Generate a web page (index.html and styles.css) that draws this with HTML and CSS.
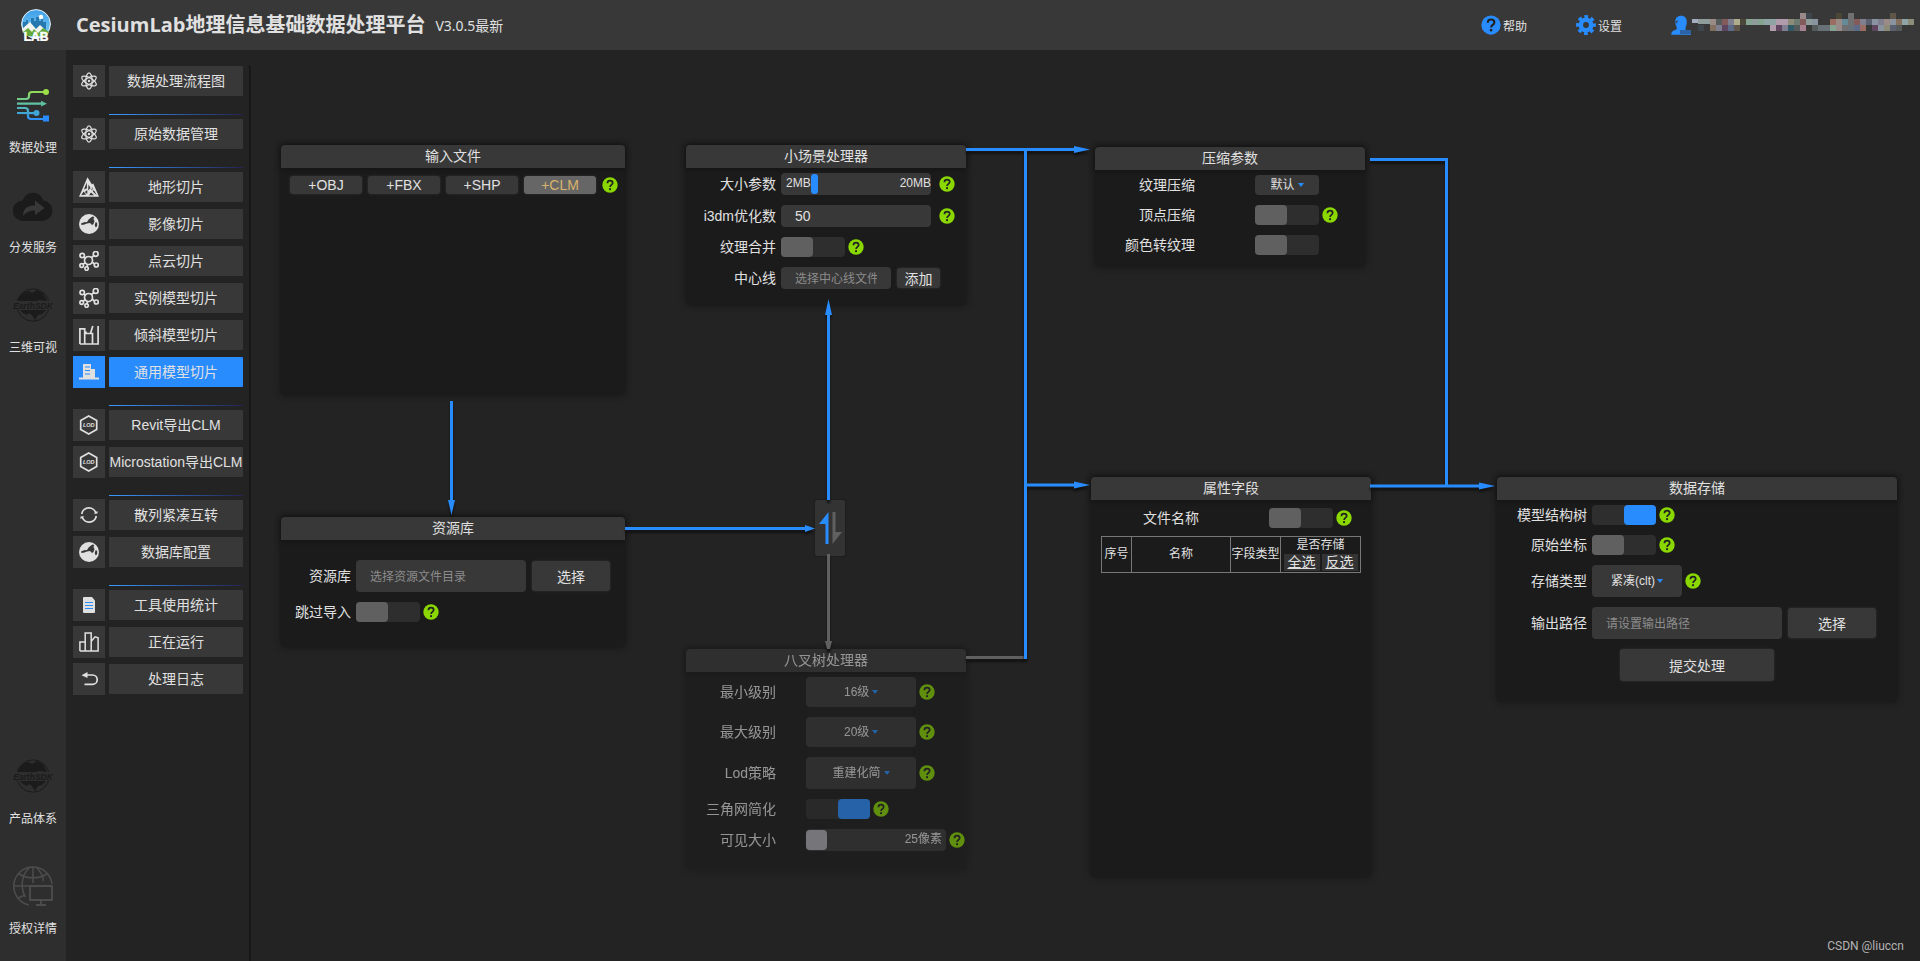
FILE: index.html
```html
<!DOCTYPE html>
<html lang="zh-CN">
<head>
    <meta charset="UTF-8">
    <meta name="viewport" content="width=device-width, initial-scale=1.0">
    <title>CesiumLab地理信息基础数据处理平台</title>
    <link rel="stylesheet" href="styles.css">
</head>
<body>
    <!-- 图标 -->
    <svg class="sprite" aria-hidden="true">
        <symbol id="i-help" viewBox="0 0 16 16">
            <circle cx="8" cy="8" r="7.7" fill="currentColor"/>
            <path d="M5.4 6.2C5.4 4.5 6.5 3.6 8 3.6s2.7 1 2.7 2.4c0 1.9-2.6 2-2.6 3.9" fill="none" stroke="#222" stroke-width="1.7"/>
            <rect x="7.1" y="11.2" width="1.9" height="1.9" fill="#222"/>
        </symbol>
        <symbol id="i-atom" viewBox="0 0 20 20">
            <g fill="none" stroke="currentColor" stroke-width="1.2">
                <ellipse cx="10" cy="10" rx="3.2" ry="8.2"/>
                <ellipse cx="10" cy="10" rx="3.2" ry="8.2" transform="rotate(60 10 10)"/>
                <ellipse cx="10" cy="10" rx="3.2" ry="8.2" transform="rotate(120 10 10)"/>
            </g>
            <circle cx="10" cy="10" r="1.2" fill="currentColor"/>
        </symbol>
        <symbol id="i-terrain" viewBox="0 0 20 20">
            <path d="M8.500.2 0 19.800h20L14.300 6.500l-1.500.8z" fill="currentColor"/>
            <path d="M7.700 5.500 5 12.500l3-1.300zM4.500 14.500 2.300 18.300l5-.8zM8.300 13l-2.500 2 2.500 2zM9.500 7.500l-.3 6 2.300-2.500zM14 9.500l-1.800 3.500 1 .3zM12 15.500l-2 2.700h5zM14.800 13l-1 1.500 4 3.700z" fill="#383838"/>
        </symbol>
        <symbol id="i-globe" viewBox="0 0 20 20">
            <circle cx="10" cy="10" r="10" fill="currentColor"/>
            <path d="M2 9.500 5 8.200l3-.2 2-3 3.500-2.500 1.800.5-.8 2 1 2-1 3-1.500 1-2-2-3 .5-2.500 1-3 .5zM16.700 8l1.500 1v3l-1.500 1.500-1-2.500z" fill="#383838"/>
        </symbol>
        <symbol id="i-points" viewBox="0 0 20 20">
            <g fill="none" stroke="currentColor" stroke-width="1.7">
                <circle cx="9.500" cy="9.500" r="4"/>
                <circle cx="3.200" cy="4.500" r="2.200"/>
                <circle cx="16.700" cy="2.900" r="2.400"/>
                <circle cx="2.700" cy="14.500" r="1.800"/>
                <circle cx="7.600" cy="17.600" r="1.700"/>
                <circle cx="17.300" cy="14" r="2"/>
                <path d="m5 6 1.500 1M12.500 6.500 15 4.500M6 12l-2 1M8.600 13.200 8 16M13 11l2.500 2"/>
            </g>
        </symbol>
        <symbol id="i-oblique" viewBox="0 0 20 20">
            <path d="M.9 19V3.800h4.800V19M6.500 8.500h7V19M7 8.500V6.500M11.500 8.500 13.800 1M19.100 1v18H.9" fill="none" stroke="currentColor" stroke-width="1.700"/>
        </symbol>
        <symbol id="i-building" viewBox="0 0 20 20">
            <path d="M4 2h8v5h4v8.500h4v2H0v-2h4z" fill="currentColor"/>
            <path d="M6 5h5M6 8.500h5M6 12h5" stroke="#288cff" stroke-width="1.200"/>
        </symbol>
        <symbol id="i-lod" viewBox="0 0 20 20">
            <path d="m9.700 1 8 4.500v9l-8 4.500-8-4.500v-9z" fill="none" stroke="currentColor" stroke-width="1.700"/>
            <text x="9.800" y="12" text-anchor="middle" font-size="5.500" font-weight="bold" fill="currentColor">LOD</text>
        </symbol>
        <symbol id="i-sync" viewBox="0 0 20 20">
            <path d="M2.700 9A7.300 7.300 0 0 1 17 8.500M17.300 11A7.300 7.300 0 0 1 3 11.500" fill="none" stroke="currentColor" stroke-width="1.700"/>
            <path d="M14.500 8.500h4V6zM5.500 11.500h-4V14z" fill="currentColor"/>
        </symbol>
        <symbol id="i-doc" viewBox="0 0 20 20">
            <path d="M5 2h8l3 3.500V17a1 1 0 0 1-1 1H5a1 1 0 0 1-1-1V3a1 1 0 0 1 1-1z" fill="currentColor"/>
            <path d="M6 7.500h8M6 10.500h8M6 13.500h8" stroke="#288cff" stroke-width="1.100"/>
        </symbol>
        <symbol id="i-running" viewBox="0 0 20 20">
            <path d="M.9 19v-9h5.300v9M6.200 11V5.500V.9h6V19M12.500 9l3.500-4.200 3.100 1V19H.9" fill="none" stroke="currentColor" stroke-width="1.500"/>
        </symbol>
        <symbol id="i-back" viewBox="0 0 20 20">
            <path d="M6 6h7.500a4.600 4.600 0 0 1 0 9.400H5.500" fill="none" stroke="currentColor" stroke-width="1.700"/>
            <path d="M2.500 6.200 8.500 3v6z" fill="currentColor"/>
        </symbol>
        <symbol id="i-earth" viewBox="0 0 40 40">
            <circle cx="20" cy="20" r="16.200" fill="none" stroke="#1b1b1b" stroke-width="1"/>
            <path d="M5 15c2-5 6-9 11-9l3 2 5-3 6 3 4 8-8-1-2 1H5zM7 25h26l-4 4-4 1-3 5-3-5-3-2-2 2-4-2z" fill="#1b1b1b"/>
            <rect x="0" y="16" width="40" height="8.500" fill="#2e2e2e"/>
            <text x="20" y="23.500" text-anchor="middle" font-size="8.500" font-weight="bold" font-style="italic" fill="#1b1b1b">EarthSDK</text>
        </symbol>
    </svg>

    <header class="header">
        <svg class="logo" viewBox="0 0 32 32">
            <defs>
                <linearGradient id="sky" x1="0" y1="0" x2="0" y2="1">
                    <stop offset="0" stop-color="#3f9fe8"/>
                    <stop offset="1" stop-color="#7fd0f5"/>
                </linearGradient>
            </defs>
            <circle cx="16" cy="15" r="14.400" fill="url(#sky)" stroke="#e8f2f8" stroke-width="1"/>
            <path d="M3 13h3v-2h2v3h3v-5h3v3h2V8h3v4h2v-2h2v3h3v9H3z" fill="#2678ae"/>
            <circle cx="21" cy="8" r="2.200" fill="#fff"/>
            <path d="m2 20 8-7 6 7 4-4 9 8H3z" fill="#f2f5ee"/>
            <path d="m3 23 5-4 4 4 2-3 4 4 5-5 6 4-2 4H5z" fill="#64a83a"/>
            <text x="16" y="31.500" text-anchor="middle" font-size="12" font-weight="bold" fill="#fff" stroke="#fff" stroke-width=".5">LAB</text>
        </svg>
        <h1 class="title">CesiumLab地理信息基础数据处理平台</h1>
        <span class="version">V3.0.5最新</span>
        <div class="header-links">
            <a href="#"><svg class="ic20 help-blue"><use href="#i-help"/></svg>帮助</a>
            <a href="#">
                <svg class="ic20" viewBox="0 0 20 20">
                    <circle cx="10" cy="10" r="5.200" fill="none" stroke="#288cff" stroke-width="4.500"/>
                    <circle cx="10" cy="10" r="8.200" fill="none" stroke="#288cff" stroke-width="3.400" stroke-dasharray="3.600 2.840" stroke-dashoffset="1.800"/>
                </svg>设置</a>
            <a href="#" class="user" aria-label="用户">
                <svg class="ic20" viewBox="0 0 20 20">
                    <path d="M10 .8c4 0 5.800 2.500 5.800 6.200 0 2.500-.6 4-1.200 5.200v3H20v4.600H.2c0-3 1.500-4.300 4.500-5l1-.5V12C4.500 10 4.200 8.500 4.200 6.500 4.500 3 6.500.8 10 .8z" fill="#288cff"/>
                    <path d="M9 15h11v4H9z" fill="#2c62a8"/>
                    <path d="M4.500 6l3-.5L5 9z" fill="#3a4a60"/>
                </svg>
                <svg class="mosaic" viewBox="0 0 37 3" preserveAspectRatio="none" shape-rendering="crispEdges">
                    <path fill="#988a88" d="M18 0h1v1h-1zM5 2h1v1H5zM24 2h1v1h-1z"/>
                    <path fill="#3c464c" d="M19 0h1v1h-1zM1 2h1v1H1z"/>
                    <path fill="#4a4638" d="M24 0h1v1h-1zM8 1h1v1H8z"/>
                    <path fill="#707070" d="M26 0h1v1h-1zM26 1h1v1h-1zM25 2h1v1h-1z"/>
                    <path fill="#5f5548" d="M33 0h1v1h-1zM7 2h1v1H7z"/>
                    <path fill="#a4acc0" d="M0 1h1v.7H0z"/>
                    <path fill="#8f9c9c" d="M1 1h2v.8H1zM10 1h1v1h-1zM19 1h1v1h-1z"/>
                    <path fill="#9b8b87" d="M3 1h1v1H3zM32 1h1v1h-1zM24 1h1v1h-1z"/>
                    <path fill="#555b5b" d="M4 1h1v1H4zM17 2h1v1h-1zM20 2h1v1h-1zM34 2h1v1h-1z"/>
                    <path fill="#845b5b" d="M5 1h1v1H5zM18 1h1v1h-1zM27 1h1v1h-1z"/>
                    <path fill="#7f7f8f" d="M6 1h1v1H6zM28 1h1v1h-1zM31 1h1v1h-1zM4 2h1v1H4zM15 2h1v1h-1z"/>
                    <path fill="#adad8d" d="M7 1h1v1H7z"/>
                    <path fill="#84a391" d="M9 1h1v1H9zM11 1h1v1h-1zM23 2h1v1h-1z"/>
                    <path fill="#8fa4a4" d="M12 1h2v1h-2zM35 1h1v1h-1z"/>
                    <path fill="#b09cac" d="M14 1h2v1h-2zM13 2h1v1h-1z"/>
                    <path fill="#8c8c78" d="M16 1h1v1h-1zM36 1h1v1h-1zM32 2h1v1h-1z"/>
                    <path fill="#6e7b70" d="M17 1h1v1h-1z"/>
                    <path fill="#8a94a0" d="M20 1h1v1h-1zM30 1h1v1h-1zM33 1h1v1h-1zM31 2h1v1h-1z"/>
                    <path fill="#9b6d62" d="M23 1h1v1h-1zM28 2h1v1h-1z"/>
                    <path fill="#658a98" d="M25 1h1v1h-1z"/>
                    <path fill="#5a6070" d="M29 1h1v1h-1zM33 2h1v1h-1z"/>
                    <path fill="#84705f" d="M34 1h1v1h-1zM3 2h1v1H3z"/>
                    <path fill="#5f4560" d="M5 2h1v1H5zM14 2h1v1h-1zM30 2h1v1h-1z"/>
                    <path fill="#5c6c88" d="M6 2h1v1H6zM27 2h1v1h-1z"/>
                    <path fill="#305a68" d="M16 2h1v1h-1z"/>
                    <path fill="#a88090" d="M18 2h1v1h-1z"/>
                    <path fill="#687078" d="M21 2h2v1h-2zM26 2h1v1h-1z"/>
                </svg>
            </a>
        </div>
    </header>

    <div class="layout">
        <nav class="nav">
            <div class="nav-top">
                <a href="#">
                    <svg viewBox="0 0 40 40">
                        <defs>
                            <linearGradient id="flow" gradientUnits="userSpaceOnUse" x1="0" y1="4" x2="0" y2="36">
                                <stop offset="0" stop-color="#9be048"/>
                                <stop offset=".5" stop-color="#5cbfae"/>
                                <stop offset="1" stop-color="#288cff"/>
                            </linearGradient>
                        </defs>
                        <g fill="none" stroke="url(#flow)" stroke-width="2.200">
                            <path d="M4 14h9q3 0 3-3V10q0-3 3-3h13M4 18.700l27-.1M4 23h8q3 0 3 3v5q0 3 3 3h14M4 28l18 .1"/>
                        </g>
                        <circle cx="33" cy="7" r="3" fill="#9be048"/>
                        <path d="M28 15.800l6 2.900-6 2.900z" fill="#5cc0a0"/>
                        <circle cx="23.500" cy="28" r="3" fill="#3fa6d8"/>
                        <rect x="30" y="30.500" width="6" height="6" fill="#288cff"/>
                    </svg>
                    <span>数据处理</span>
                </a>
                <a href="#">
                    <svg viewBox="0 0 40 40">
                        <path d="M10.500 36A10 10 0 0 1 9.500 15.500a11 11 0 0 1 21 0A10.300 10.300 0 0 1 29.500 36z" fill="#1b1b1b"/>
                        <path d="M10 31c0-8 5-10.500 12-10.500V15.500l9.500 7.500-9.500 7v-4.500c-5 0-9 1.500-12 5.500z" fill="#383838"/>
                    </svg>
                    <span>分发服务</span>
                </a>
                <a href="#"><svg><use href="#i-earth"/></svg><span>三维可视</span></a>
            </div>
            <div class="nav-bottom">
                <a href="#"><svg><use href="#i-earth"/></svg><span>产品体系</span></a>
                <a href="#">
                    <svg viewBox="0 0 40 40">
                        <g fill="none" stroke="#4c4c4c" stroke-width="1.600">
                            <path d="M39 18A19.200 19.200 0 1 0 16 39M20 1v16M1 20h16M16.500 1.500C7 10 8 24 12.500 31M23.500 1.500C28 6 30 10 30.500 15M6 8c8 5 20 5 28 0M5 32l7-3"/>
                            <path d="M17 20h22v14H17zM28 34v5M23 39h10" stroke-width="1.900"/>
                        </g>
                    </svg>
                    <span>授权详情</span>
                </a>
            </div>
        </nav>

        <aside class="sidebar">
            <div class="menu-group">
                <a href="#" class="menu-item"><i><svg><use href="#i-atom"/></svg></i><span>数据处理流程图</span></a>
            </div>
            <div class="menu-group">
                <a href="#" class="menu-item"><i><svg><use href="#i-atom"/></svg></i><span>原始数据管理</span></a>
            </div>
            <div class="menu-group">
                <a href="#" class="menu-item"><i><svg><use href="#i-terrain"/></svg></i><span>地形切片</span></a>
                <a href="#" class="menu-item"><i><svg><use href="#i-globe"/></svg></i><span>影像切片</span></a>
                <a href="#" class="menu-item"><i><svg><use href="#i-points"/></svg></i><span>点云切片</span></a>
                <a href="#" class="menu-item"><i><svg><use href="#i-points"/></svg></i><span>实例模型切片</span></a>
                <a href="#" class="menu-item"><i><svg><use href="#i-oblique"/></svg></i><span>倾斜模型切片</span></a>
                <a href="#" class="menu-item active"><i><svg><use href="#i-building"/></svg></i><span>通用模型切片</span></a>
            </div>
            <div class="menu-group">
                <a href="#" class="menu-item"><i><svg><use href="#i-lod"/></svg></i><span>Revit导出CLM</span></a>
                <a href="#" class="menu-item"><i><svg><use href="#i-lod"/></svg></i><span>Microstation导出CLM</span></a>
            </div>
            <div class="menu-group">
                <a href="#" class="menu-item"><i><svg><use href="#i-sync"/></svg></i><span>散列紧凑互转</span></a>
                <a href="#" class="menu-item"><i><svg><use href="#i-globe"/></svg></i><span>数据库配置</span></a>
            </div>
            <div class="menu-group">
                <a href="#" class="menu-item"><i><svg><use href="#i-doc"/></svg></i><span>工具使用统计</span></a>
                <a href="#" class="menu-item"><i><svg><use href="#i-running"/></svg></i><span>正在运行</span></a>
                <a href="#" class="menu-item"><i><svg><use href="#i-back"/></svg></i><span>处理日志</span></a>
            </div>
        </aside>

        <main class="canvas">
            <section class="node node-input">
                <h2>输入文件</h2>
                <div class="file-buttons">
                    <button>+OBJ</button>
                    <button>+FBX</button>
                    <button>+SHP</button>
                    <button class="hover">+CLM</button>
                    <svg class="help"><use href="#i-help"/></svg>
                </div>
            </section>

            <section class="node node-lib">
                <h2>资源库</h2>
                <div class="row">
                    <label for="lib">资源库</label>
                    <input type="text" id="lib" class="tall" placeholder="选择资源文件目录">
                    <button>选择</button>
                </div>
                <div class="row">
                    <label for="skip">跳过导入</label>
                    <input type="checkbox" id="skip" class="switch">
                    <svg class="help"><use href="#i-help"/></svg>
                </div>
            </section>

            <section class="node node-scene">
                <h2>小场景处理器</h2>
                <div class="row wide">
                    <label for="size">大小参数</label>
                    <div class="range">
                        <input type="range" id="size" min="0" max="100" value="21">
                        <span class="min">2MB</span><span class="max">20MB</span>
                    </div>
                    <svg class="help"><use href="#i-help"/></svg>
                </div>
                <div class="row wide">
                    <label for="i3dm">i3dm优化数</label>
                    <input type="text" id="i3dm" value="50">
                    <svg class="help"><use href="#i-help"/></svg>
                </div>
                <div class="row">
                    <label for="merge">纹理合并</label>
                    <input type="checkbox" id="merge" class="switch">
                    <svg class="help"><use href="#i-help"/></svg>
                </div>
                <div class="row">
                    <label for="center">中心线</label>
                    <input type="text" id="center" class="short" placeholder="选择中心线文件">
                    <button>添加</button>
                </div>
            </section>

            <button class="toggle" aria-label="切换处理器">
                <svg viewBox="0 0 30 56">
                    <path d="M13.500 12v32h-3V24H4z" fill="#288cff"/>
                    <path d="M17.500 44V12h3v20H27z" fill="#606060"/>
                </svg>
            </button>

            <section class="node node-octree">
                <h2>八叉树处理器</h2>
                <div class="row">
                    <label for="minlv">最小级别</label>
                    <div class="select"><select id="minlv"><option>16级</option></select></div>
                    <svg class="help"><use href="#i-help"/></svg>
                </div>
                <div class="row">
                    <label for="maxlv">最大级别</label>
                    <div class="select"><select id="maxlv"><option>20级</option></select></div>
                    <svg class="help"><use href="#i-help"/></svg>
                </div>
                <div class="row">
                    <label for="lod">Lod策略</label>
                    <div class="select tall"><select id="lod"><option>重建化简</option></select></div>
                    <svg class="help"><use href="#i-help"/></svg>
                </div>
                <div class="row">
                    <label for="tri">三角网简化</label>
                    <input type="checkbox" id="tri" class="switch" checked>
                    <svg class="help"><use href="#i-help"/></svg>
                </div>
                <div class="row">
                    <label for="visible">可见大小</label>
                    <div class="range">
                        <input type="range" id="visible" min="0" max="100" value="0">
                        <span class="max">25像素</span>
                    </div>
                    <svg class="help"><use href="#i-help"/></svg>
                </div>
            </section>

            <section class="node node-compress">
                <h2>压缩参数</h2>
                <div class="row">
                    <label for="tex">纹理压缩</label>
                    <div class="select"><select id="tex"><option>默认</option></select></div>
                </div>
                <div class="row">
                    <label for="vertex">顶点压缩</label>
                    <input type="checkbox" id="vertex" class="switch">
                    <svg class="help"><use href="#i-help"/></svg>
                </div>
                <div class="row">
                    <label for="color">颜色转纹理</label>
                    <input type="checkbox" id="color" class="switch">
                </div>
            </section>

            <section class="node node-fields">
                <h2>属性字段</h2>
                <div class="row">
                    <label for="fname">文件名称</label>
                    <input type="checkbox" id="fname" class="switch">
                    <svg class="help"><use href="#i-help"/></svg>
                </div>
                <table>
                    <thead>
                        <tr>
                            <th class="col-no">序号</th>
                            <th>名称</th>
                            <th class="col-type">字段类型</th>
                            <th class="col-save">是否存储
                                <div class="pick"><button>全选</button><button>反选</button></div>
                            </th>
                        </tr>
                    </thead>
                </table>
            </section>

            <section class="node node-store">
                <h2>数据存储</h2>
                <div class="row">
                    <label for="tree">模型结构树</label>
                    <input type="checkbox" id="tree" class="switch" checked>
                    <svg class="help"><use href="#i-help"/></svg>
                </div>
                <div class="row">
                    <label for="coord">原始坐标</label>
                    <input type="checkbox" id="coord" class="switch">
                    <svg class="help"><use href="#i-help"/></svg>
                </div>
                <div class="row">
                    <label for="type">存储类型</label>
                    <div class="select tall"><select id="type"><option>紧凑(clt)</option></select></div>
                    <svg class="help"><use href="#i-help"/></svg>
                </div>
                <div class="row">
                    <label for="out">输出路径</label>
                    <input type="text" id="out" class="tall" placeholder="请设置输出路径">
                    <button>选择</button>
                </div>
                <button class="submit">提交处理</button>
            </section>

            <!-- 连线 -->
            <svg class="wires">
                <g class="wire off">
                    <path d="M577.500 504V598M715 607.500h59"/>
                    <path class="head" d="M574 591h7l-2 8h-3z"/>
                </g>
                <g class="wire">
                    <path d="M200.500 351V455M374 478.500H556M577.500 450V262M715 99.500H826M774.500 98V609M774 435H826M1119 109.500H1195.500V436M1119 436H1231"/>
                    <path class="head" d="M197 450h7l-3.500 15zM554 475l10 3.500-10 3.500zM574 265h7l-3.500-16zM823 96l16 3.500-16 3.500zM823 431.500l16 3.500-16 3.500zM1228 432.500l16 3.500-16 3.500z"/>
                </g>
            </svg>

            <span class="watermark">CSDN @liuccn</span>
        </main>
    </div>
</body>
</html>
```

FILE: styles.css
```css
* {
    box-sizing: border-box;
}

body {
    margin: 0;
    min-height: 100vh;
    display: flex;
    flex-direction: column;
    background: #232323;
    color: #e0e0e0;
    font-family: "Liberation Sans", "Noto Sans CJK SC", sans-serif;
    font-size: 14px;
}

a {
    color: inherit;
    text-decoration: none;
}

button, input, select {
    font-family: inherit;
    font-size: 14px;
    color: inherit;
    border: 0;
    margin: 0;
    padding: 0;
}

svg {
    display: block;
    flex: none;
}

.sprite {
    display: none;
}

/* 顶栏 */
.header {
    height: 50px;
    display: flex;
    align-items: center;
    padding: 0 6px 0 20px;
    background: #383838;
}

.logo {
    width: 32px;
    height: 32px;
}

.title {
    margin: 0 10px 0 24px;
    font-family: "Open Sans", "Noto Sans CJK SC", sans-serif;
    font-size: 20px;
    line-height: 28px;
    font-weight: bold;
}

.version {
    font-family: "Noto Sans", "Noto Sans CJK SC", sans-serif;
}

.header-links {
    margin-left: auto;
    display: flex;
    gap: 49px;
    font-size: 12px;
}

.header-links a {
    display: flex;
    align-items: center;
    gap: 2px;
}

.header-links .user {
    gap: 1px;
}

.ic20 {
    width: 20px;
    height: 20px;
}

.help-blue {
    color: #288cff;
}

.mosaic {
    width: 222px;
    height: 18px;
    margin-bottom: 6px;
}

.layout {
    flex: 1;
    display: flex;
}

/* 左侧导航 */
.nav {
    width: 66px;
    padding: 35px 0 23px;
    display: flex;
    flex-direction: column;
    justify-content: space-between;
    background: #2e2e2e;
    font-size: 12px;
    line-height: 18px;
}

.nav-top, .nav-bottom {
    display: flex;
    flex-direction: column;
    gap: 28px;
}

.nav-bottom {
    gap: 38px;
}

.nav a {
    display: flex;
    flex-direction: column;
    align-items: center;
    gap: 14px;
}

.nav svg {
    width: 40px;
    height: 40px;
}

/* 菜单 */
.sidebar {
    width: 185px;
    padding-left: 7px;
    margin-top: 15px;
    border-right: 2px solid #171717;
    border-top-right-radius: 4px;
}

.menu-group + .menu-group::before {
    content: "";
    display: block;
    height: 1px;
    width: 134px;
    margin: 17px 0 3px 36px;
    background: linear-gradient(to right, #3a9bff, #232350);
}

.menu-item {
    display: flex;
    align-items: center;
    gap: 4px;
    margin-bottom: 5px;
}

.menu-item i {
    width: 32px;
    height: 32px;
    padding: 6px;
    background: #383838;
}

.menu-item svg {
    width: 20px;
    height: 20px;
}

.menu-item span {
    width: 134px;
    line-height: 30px;
    border-radius: 1px;
    text-align: center;
    white-space: nowrap;
    background: #383838;
}

.menu-item.active i, .menu-item.active span {
    background: #288cff;
}

/* 流程画布 */
.canvas {
    flex: 1;
    position: relative;
}

.wires {
    position: absolute;
    inset: 0;
    width: 100%;
    height: 100%;
    pointer-events: none;
}

.wire {
    fill: none;
    stroke: #288cff;
    stroke-width: 3;
    filter: drop-shadow(0 3px 1px #111);
}

.wire .head {
    fill: #288cff;
    stroke: none;
}

.wire.off {
    stroke: #606060;
}

.wire.off .head {
    fill: #606060;
}

.node {
    position: absolute;
    border-radius: 4px;
    background: #1b1b1b;
    box-shadow: 0 0 6px #151515;
}

.node h2 {
    margin: 0 0 5px;
    font-size: 14px;
    font-weight: normal;
    line-height: 23px;
    text-align: center;
    border-radius: 4px 4px 0 0;
    background: #383838;
    box-shadow: 0 0 5px #111;
}

.node button {
    background: #383838;
    border-radius: 3px;
    box-shadow: 0 0 2px 1px #262626;
}

.row {
    display: flex;
    align-items: center;
    gap: 3px;
    margin-bottom: 10px;
}

.row label {
    width: 90px;
    margin-right: 2px;
    line-height: 20px;
    text-align: right;
}

.row button {
    height: 20px;
    margin-left: 3px;
}

.row.wide {
    gap: 8px;
}

.row.wide label {
    margin-right: -3px;
}

.help {
    width: 16px;
    height: 16px;
    color: #8ad800;
}

input[type="text"] {
    width: 150px;
    height: 22px;
    padding: 0 14px;
    border-radius: 4px;
    background: #383838;
}

input::placeholder {
    font-size: 12px;
    color: #8c8c8c;
}

input[type="text"].tall {
    height: 32px;
}

input[type="text"].short {
    width: 110px;
}

.switch {
    appearance: none;
    width: 64px;
    height: 20px;
    border-radius: 4px;
    background: #2e2e2e;
}

.switch::before {
    content: "";
    display: block;
    width: 32px;
    height: 20px;
    border-radius: 4px;
    background: #606060;
}

.switch:checked::before {
    margin-left: 32px;
    background: #288cff;
}

.select {
    width: 110px;
    height: 30px;
    display: flex;
    justify-content: center;
    align-items: center;
    gap: 2px;
    border-radius: 4px;
    background: #383838;
}

.select.tall {
    height: 32px;
}

.select select {
    appearance: none;
    background: none;
    font-size: 12px;
}

.select::after {
    content: "";
    border: 3px solid transparent;
    border-top: 4px solid #288cff;
    border-bottom: 0;
}

.range {
    position: relative;
    width: 150px;
    height: 22px;
    font-size: 12px;
    line-height: 20px;
}

.range input {
    appearance: none;
    display: block;
    width: 100%;
    height: 22px;
    border-radius: 4px;
    background: #383838;
}

.range input::-webkit-slider-thumb {
    appearance: none;
    width: 7px;
    height: 20px;
    border-radius: 3px;
    background: #288cff;
}

.range span {
    position: absolute;
    top: 0;
    pointer-events: none;
}

.range .min {
    left: 5px;
}

.range .max {
    right: 0;
}

.node-input {
    left: 30px;
    top: 95px;
    width: 344px;
    height: 250px;
}

.file-buttons {
    display: flex;
    align-items: center;
    gap: 6px;
    padding: 3px 0 3px 9px;
}

.file-buttons button {
    width: 72px;
    height: 18px;
}

.file-buttons .hover {
    background: #666;
    color: #d8b46c;
}

.node-lib {
    left: 30px;
    top: 467px;
    width: 344px;
    height: 130px;
}

.node-lib h2 {
    margin-bottom: 20px;
}

.node-lib label {
    width: 70px;
}

.node-lib input[type="text"] {
    width: 170px;
}

.node-lib button {
    width: 78px;
    height: 30px;
}

.node-scene {
    left: 435px;
    top: 95px;
    width: 280px;
    height: 160px;
}

.node-scene button {
    width: 43px;
}

.toggle {
    position: absolute;
    left: 564px;
    top: 450px;
    width: 30px;
    height: 56px;
    border-radius: 2px;
    background: #333;
    box-shadow: 0 0 2px #151515;
}

.node-octree {
    left: 435px;
    top: 599px;
    width: 280px;
    height: 221px;
    opacity: .6;
}

.node-octree label {
    margin-right: 27px;
}

.node-octree .range {
    width: 140px;
}

.node-octree .range .max {
    right: 4px;
}

.node-octree input::-webkit-slider-thumb {
    width: 21px;
    border-radius: 4px;
    background: #acacb4;
}

.node-compress {
    left: 844px;
    top: 97px;
    width: 270px;
    height: 120px;
}

.node-compress label {
    width: 100px;
    margin-right: 57px;
}

.node-compress .select {
    width: 64px;
    height: 20px;
}

.node-fields {
    left: 840px;
    top: 427px;
    width: 280px;
    height: 400px;
}

.node-fields h2 {
    margin-bottom: 8px;
}

.node-fields .row {
    margin-bottom: 8px;
}

.node-fields label {
    width: 108px;
    margin-right: 67px;
}

.node-fields table {
    width: 260px;
    margin: 0 10px;
    border-collapse: collapse;
    table-layout: fixed;
    font-size: 12px;
}

.node-fields th {
    padding: 0;
    border: 1px solid #777;
    font-weight: normal;
    line-height: 17px;
    white-space: nowrap;
}

.col-no {
    width: 30px;
}

.col-type {
    width: 50px;
}

.col-save {
    width: 80px;
}

.pick {
    display: flex;
    justify-content: center;
    gap: 2px;
    padding-bottom: 1px;
}

.pick button {
    width: 36px;
    height: 17px;
    line-height: 17px;
    border-radius: 0;
    box-shadow: none;
    background: #333;
    text-decoration: underline;
}

.node-store {
    left: 1246px;
    top: 427px;
    width: 400px;
    height: 225px;
}

.node-store .select {
    width: 90px;
}

.node-store input[type="text"] {
    width: 190px;
}

.node-store .row button {
    width: 88px;
    height: 30px;
}

.node-store .submit {
    display: block;
    width: 154px;
    height: 32px;
    margin: 0 auto;
}

.watermark {
    position: absolute;
    right: 16px;
    bottom: 7px;
    font-family: Roboto, sans-serif;
    font-size: 12px;
    line-height: 16px;
    color: #b4b4b4;
}
```
